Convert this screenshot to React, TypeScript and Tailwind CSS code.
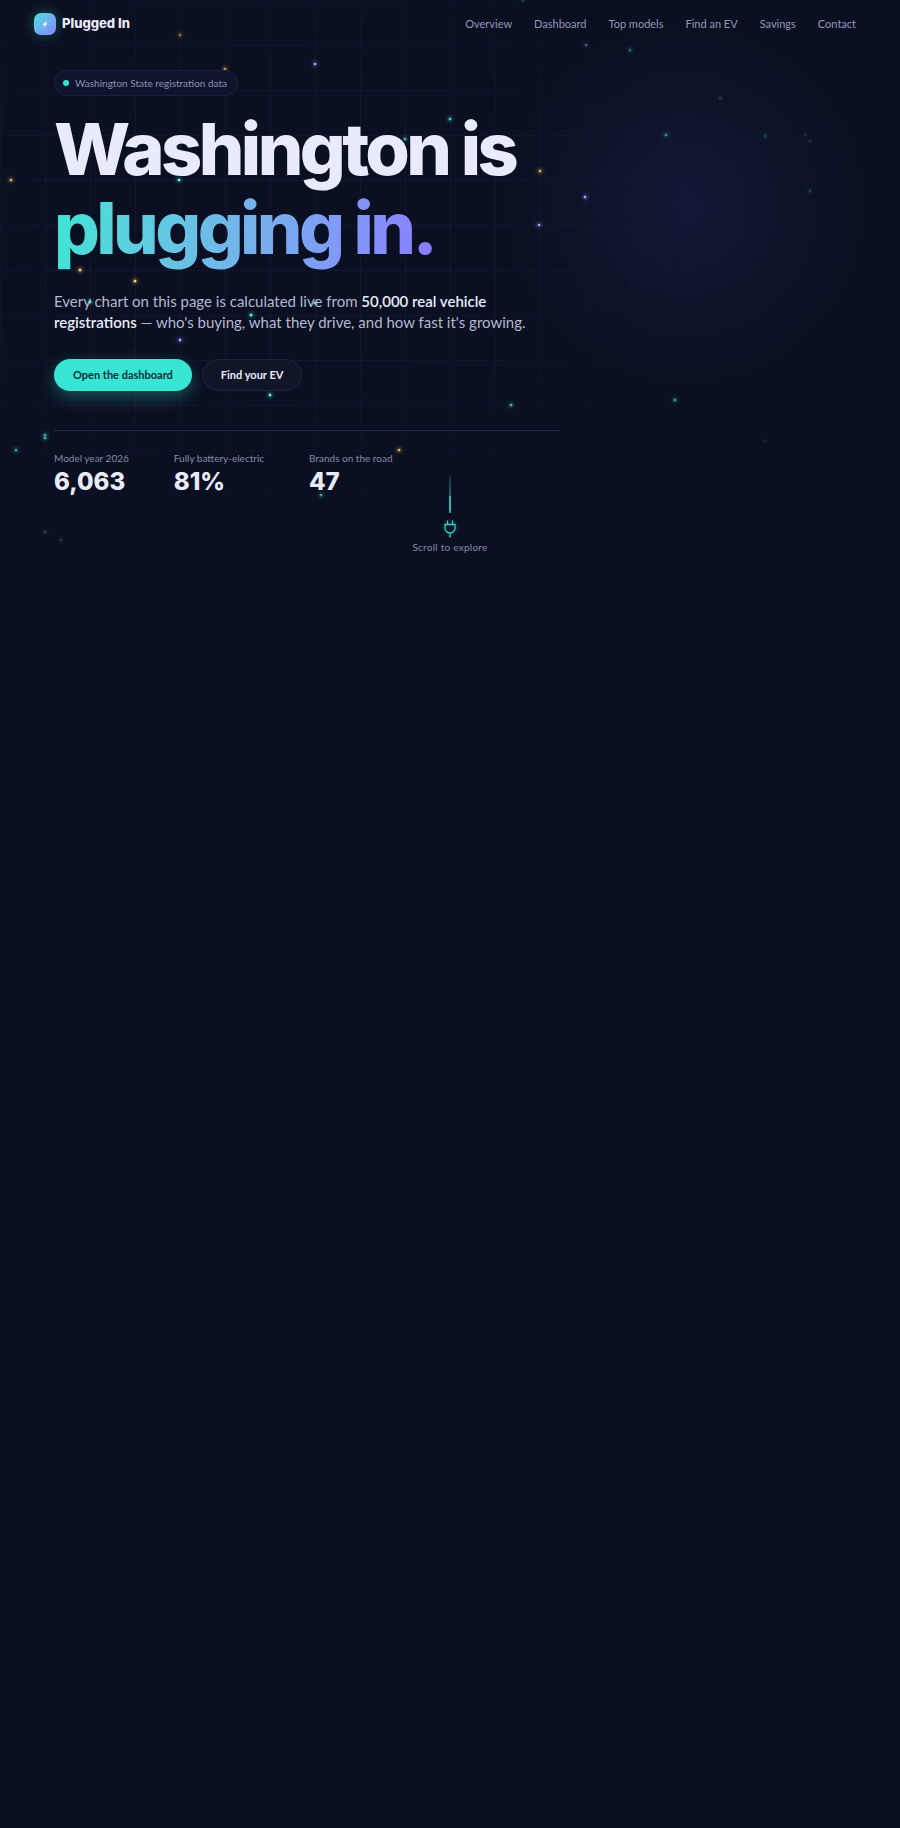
type Spark = [x: number, y: number, color: string, opacity: number];

const TEAL = '#34e5d0';
const GOLD = '#ffc24d';
const VIOLET = '#8b7dff';

const sparks: Spark[] = [
  [180, 35, GOLD, 0.5], [225, 69, GOLD, 0.7], [315, 64, VIOLET, 0.9], [523, 0, TEAL, 0.25],
  [586, 45, VIOLET, 0.4], [630, 50, TEAL, 0.4], [720, 98, TEAL, 0.2], [450, 119, TEAL, 0.8],
  [405, 139, TEAL, 0.7], [11, 180, GOLD, 0.8], [179, 180, TEAL, 1], [540, 171, GOLD, 0.8],
  [539, 225, VIOLET, 0.9], [80, 270, GOLD, 1], [135, 281, GOLD, 1], [90, 302, TEAL, 1],
  [251, 315, TEAL, 1], [315, 303, TEAL, 1], [180, 340, VIOLET, 1], [270, 395, TEAL, 1],
  [511, 405, TEAL, 0.7], [45, 435, TEAL, 0.6], [45, 438, TEAL, 0.6], [16, 450, TEAL, 0.6],
  [399, 450, GOLD, 0.8], [321, 495, TEAL, 0.6], [45, 532, TEAL, 0.25], [61, 540, TEAL, 0.2],
  [585, 197, VIOLET, 0.9], [666, 135, TEAL, 0.5], [765, 136, TEAL, 0.22], [805, 135, TEAL, 0.12],
  [810, 141, TEAL, 0.15], [810, 191, TEAL, 0.22], [675, 400, TEAL, 0.6], [765, 441, TEAL, 0.1],
];

const links = [
  ['Overview', '#overview'],
  ['Dashboard', '#dashboard'],
  ['Top models', '#models'],
  ['Find an EV', '#find'],
  ['Savings', '#savings'],
  ['Contact', '#contact'],
];

const stats = [
  ['Model year 2026', '6,063'],
  ['Fully battery-electric', '81%'],
  ['Brands on the road', '47'],
];

function Backdrop() {
  return (
    <div aria-hidden="true" className="pointer-events-none absolute inset-0 overflow-hidden">
      <div className="absolute inset-0 bg-[radial-gradient(circle_at_685px_205px,#141734_0px,#13173000_185px)]" />
      <div className="absolute inset-0 bg-[linear-gradient(to_right,#8ca0ff0e_1px,transparent_1px),linear-gradient(to_bottom,#8ca0ff0e_1px,transparent_1px)] bg-[size:45px_45px] [mask-image:radial-gradient(ellipse_480px_330px_at_270px_225px,black_40%,transparent_100%)]" />
      <svg className="absolute left-0 top-0 h-full w-full">
        {sparks.map(([x, y, color, opacity], i) => (
          <g key={i} opacity={opacity}>
            <circle cx={x} cy={y} r="5" fill={color} opacity="0.07" />
            <circle cx={x} cy={y} r="3" fill={color} opacity="0.14" />
            <circle cx={x} cy={y} r="1.5" fill={color} opacity="0.9" />
            <circle cx={x} cy={y} r="1" fill="#ffffff" opacity="0.6" />
          </g>
        ))}
      </svg>
    </div>
  );
}

function Header() {
  return (
    <header className="relative flex items-center justify-between pt-[13px] pr-11 pl-[34px]">
      <a href="#top" className="flex items-center gap-1.5 font-['Inter',sans-serif] text-[13px] font-extrabold text-[#e8ecfa]">
        <span className="flex size-[22px] items-center justify-center rounded-[7px] bg-linear-135 from-[#3fe0d6] to-[#8480ff] shadow-[0_0_14px_#34e5d055]">
          <svg viewBox="0 0 10 12" className="h-2.5 w-2" fill="#ffffff" aria-hidden="true">
            <path d="M7.600 1 2 6.800l2.600.3L2.600 11 8.200 5.400l-2.700-.3z" />
          </svg>
        </span>
        Plugged In
      </a>
      <nav className="flex gap-[22px] text-[11px] text-[#9299b8]">
        {links.map(([label, href]) => (
          <a key={label} href={href}>{label}</a>
        ))}
      </nav>
    </header>
  );
}

export default function App() {
  return (
    <div id="top" className="min-h-screen bg-[#0a0f21] font-['Lato',sans-serif] text-[#e8ecfa]">
      <div className="relative pb-[67px]">
        <Backdrop />
        <Header />
        <main className="relative px-[54px] pt-[33px]">
          <p className="inline-flex items-center gap-1.5 rounded-full border border-[#1b2140] bg-[#0f142c] px-2 py-1 pr-2.5 text-[10px] leading-4 text-[#8b92b0]">
            <span className="size-1.5 rounded-full bg-[#34e5d0]" />
            Washington State registration data
          </p>
          <h1 className="mt-[13px] font-['Inter',sans-serif] text-[72px] leading-[79px] font-extrabold tracking-tighter">
            Washington is
            <br />
            <span className="bg-linear-100 from-[#38e5d2] to-[#8b7bff] bg-clip-text text-transparent">plugging in.</span>
          </h1>
          <p className="mt-6 max-w-[490px] text-[15px] leading-[21px] text-[#b3b9d2]">
            Every chart on this page is calculated live from{' '}
            <strong className="font-semibold text-[#e8ecfa]">50,000 real vehicle registrations</strong>
            {' '}— who's buying, what they drive, and how fast it's growing.
          </p>
          <div className="mt-[26px] flex gap-2.5 text-[11px] leading-4 font-bold">
            <button type="button" className="rounded-full bg-[#38e5d2] px-[19px] py-2 text-[#07303a] shadow-[0_6px_18px_#34e5d055]">
              Open the dashboard
            </button>
            <button type="button" className="rounded-full border border-[#1e243c] bg-[#101528] px-[18px] py-[7px]">
              Find your EV
            </button>
          </div>
          <dl className="mt-[39px] flex max-w-[506px] gap-[45px] border-t border-[#222944] pt-[19px]">
            {stats.map(([label, value]) => (
              <div key={label}>
                <dt className="text-[10px] leading-4 text-[#858ca9]">{label}</dt>
                <dd className="mt-0.5 font-['Inter',sans-serif] text-[24px] leading-7 font-extrabold">{value}</dd>
              </div>
            ))}
          </dl>
        </main>
        <a href="#overview" className="absolute inset-x-0 bottom-2 mx-auto flex w-fit flex-col items-center text-[10px] leading-4 tracking-wide text-[#858ca9]">
          <svg width="20" height="66" viewBox="0 0 20 66" fill="none" aria-hidden="true">
            <defs>
              <linearGradient id="cable" x1="0" y1="0" x2="0" y2="1">
                <stop offset="0" stopColor="#34d5c4" stopOpacity="0.15" />
                <stop offset="1" stopColor="#34d5c4" stopOpacity="0.7" />
              </linearGradient>
            </defs>
            <rect x="9" y="2" width="2" height="38" fill="url(#cable)" />
            <rect x="9" y="23" width="2" height="15" fill="#34c9ba" opacity="0.8" />
            <circle cx="10" cy="55" r="9" fill="#34e5d0" opacity="0.06" />
            <path d="M7.500 47.500v4M12.500 47.500v4M5 51.500h10v3.500a5 5 0 0 1-10 0zM10 60v4.500" stroke="#34d5c4" strokeWidth="1.300" />
          </svg>
          Scroll to explore
        </a>
      </div>
    </div>
  );
}
